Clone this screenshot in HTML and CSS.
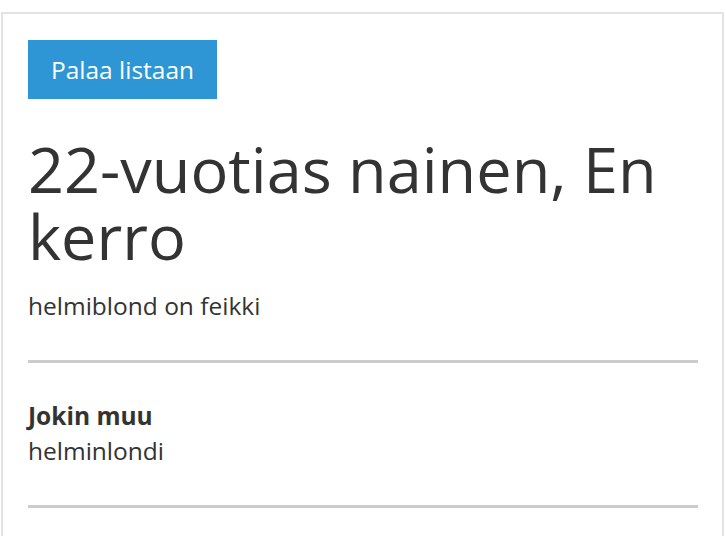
FILE: index.html
```html
<!DOCTYPE html>
<html lang="fi">

<head>
    <meta charset="UTF-8">
    <meta name="viewport" content="width=device-width, initial-scale=1.0">
    <title>22-vuotias nainen, En kerro</title>
    <link rel="stylesheet" href="styles.css">
</head>

<body>
    <div class="card">
        <button class="back-btn">Palaa listaan</button>

        <h1 class="title">22-vuotias nainen, En kerro</h1>
        <p class="subtitle">helmiblond on feikki</p>

        <hr class="divider">

        <div class="field">
            <div class="field-label">Jokin muu</div>
            <div class="field-value">helminlondi</div>
        </div>

        <hr class="divider">
    </div>
</body>

</html>
```

FILE: styles.css
```css
* {
    box-sizing: border-box;
    margin: 0;
    padding: 0;
    font-family: "Open Sans", Arial, sans-serif;
}

body {
    margin: 0;
    padding: 12px 2px 0 1px;
    background: #ffffff;
    color: #333333;
    overflow: hidden;
}

.card {
    border: 2px solid #e3e3e3;
    border-bottom: none;
    padding: 26px 24px 0 25px;
    height: 524px;
}

.back-btn {
    display: inline-block;
    height: 59px;
    width: 189px;
    background-color: #2e96d4;
    color: white;
    border: none;
    font-size: 24.5px;
    cursor: pointer;
}

.title {
    font-size: 63px;
    line-height: 67px;
    font-weight: 400;
    margin-top: 36px;
}

.subtitle {
    font-size: 24.5px;
    line-height: 35px;
    margin-top: 19px;
}

.divider {
    border: none;
    height: 3px;
    background: #cccccc;
    margin: 37px 0 35px;
}

.field-label {
    font-size: 24.5px;
    line-height: 35px;
    font-weight: 700;
}

.field-value {
    font-size: 24.5px;
    line-height: 35px;
}
```
